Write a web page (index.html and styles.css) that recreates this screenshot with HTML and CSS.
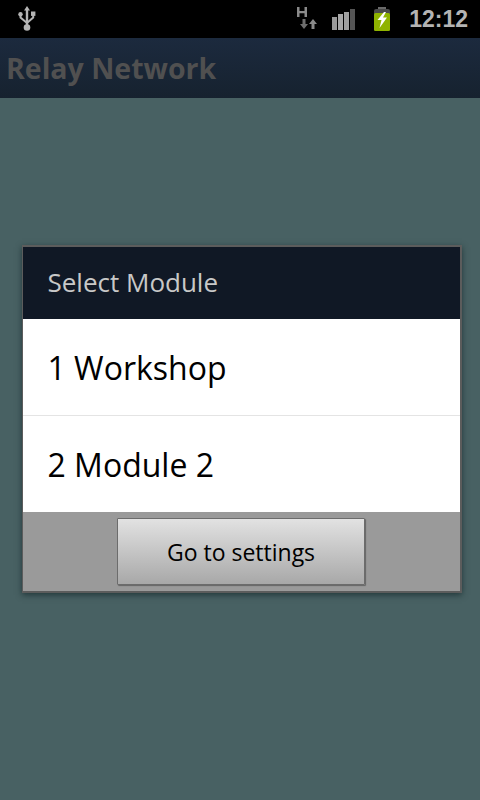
FILE: index.html
```html
<!DOCTYPE html>
<html lang="en">
<head>
<meta charset="utf-8">
<title>Relay Network</title>
<link rel="stylesheet" href="styles.css">
</head>
<body>
<div class="status">
  <svg class="usb" width="18" height="26" viewBox="0 0 18 26">
    <path d="M9 0 L12 4.500 H10.200 V19 H7.800 V4.500 H6 Z" fill="#b4b4b4"/>
    <path d="M2.500 9 V11.500 L9 17 L15.200 11.500 V9" fill="none" stroke="#b4b4b4" stroke-width="2"/>
    <circle cx="2.500" cy="8.300" r="2.200" fill="#b4b4b4"/>
    <rect x="13" y="5.500" width="4.400" height="4.400" fill="#b4b4b4"/>
    <circle cx="9" cy="21.500" r="3.300" fill="#b4b4b4"/>
  </svg>
  <div class="status-right">
    <svg class="net" width="22" height="30" viewBox="0 0 22 30">
      <path d="M1 3 H3.500 V7 H8.500 V3 H11 V13 H8.500 V9.200 H3.500 V13 H1 Z" fill="#8a8a8a"/>
      <path d="M6.500 15 H9.500 V20 H12 L8 25 L4 20 H6.500 Z" fill="#6e6e6e"/>
      <path d="M15.500 25 H18.500 V20 H21 L17 15 L13 20 H15.500 Z" fill="#8a8a8a"/>
    </svg>
    <svg class="signal" width="24" height="24" viewBox="0 0 24 24">
      <rect x="1" y="10" width="5" height="13" fill="#9a9a9a"/>
      <rect x="7" y="7" width="5" height="16" fill="#a8a8a8"/>
      <rect x="13" y="5" width="5" height="18" fill="#a0a0a0"/>
      <rect x="19" y="2" width="5" height="21" fill="#555555"/>
    </svg>
    <svg class="battery" width="18" height="26" viewBox="0 0 18 26">
      <rect x="5" y="1" width="8" height="2" fill="#6a6a6a"/>
      <rect x="1" y="3" width="16" height="22" rx="2" fill="#4a4a4a"/>
      <rect x="1" y="7" width="16" height="18" rx="1.500" fill="#8fb300"/>
      <path d="M11 6 L4.500 14 H8.500 L6.500 22 L14 11.500 H10 L13 6 Z" fill="#ffffff"/>
    </svg>
    <span class="clock">12:12</span>
  </div>
</div>
<div class="screen">
  <header class="appbar">Relay Network</header>
  <div class="scrim">
    <section class="dialog">
      <h1 class="dialog-title">Select Module</h1>
      <ul class="list">
        <li class="item">1 Workshop</li>
        <li class="item">2 Module 2</li>
      </ul>
      <div class="footer">
        <button class="btn" type="button">Go to settings</button>
      </div>
    </section>
  </div>
</div>
</body>
</html>
```
FILE: styles.css
```css
* { box-sizing: border-box; }
html, body { margin: 0; padding: 0; height: 100%; }
body {
  width: 480px;
  height: 800px;
  display: flex;
  flex-direction: column;
  overflow: hidden;
  background: #000;
  font-family: "Open Sans", "Noto Sans", sans-serif;
}
.status {
  height: 38px;
  flex: none;
  background: #000;
  display: flex;
  align-items: center;
  justify-content: space-between;
  padding: 0 12px 0 18px;
}
.status-right { display: flex; align-items: center; }
.net { margin-right: 13px; }
.signal { margin-right: 18px; }
.battery { margin-right: 18px; }
.clock {
  font-family: "Liberation Sans", Arial, sans-serif;
  font-size: 23px;
  font-weight: 700;
  color: #b4b4b4;
  line-height: 38px;
}
.screen {
  flex: 1;
  position: relative;
  background: #486163;
}
.appbar {
  height: 60px;
  padding: 0 6px;
  background: linear-gradient(#1c2a3e, #16222f);
  color: #505050;
  font-size: 28.500px;
  font-weight: 700;
  line-height: 60px;
}
.scrim {
  position: absolute;
  inset: 0;
  display: flex;
  align-items: center;
  justify-content: center;
}
.dialog {
  width: 440px;
  height: 348px;
  margin-left: 3px;
  border: 2px solid #5c5c5c;
  border-left-width: 1px;
  display: flex;
  flex-direction: column;
  box-shadow: 0 2px 6px rgba(25, 45, 47, 0.8);
}
.dialog-title {
  margin: 0;
  height: 72px;
  padding-left: 25px;
  background: #101825;
  color: #c8c8c8;
  font-size: 26px;
  font-weight: 400;
  line-height: 70px;
}
.list { margin: 0; padding: 0; list-style: none; background: #fff; }
.item {
  height: 96px;
  padding-left: 25px;
  color: #000;
  font-size: 32px;
  line-height: 98px;
}
.item + .item { height: 97px; border-top: 1px solid #e4e4e4; }
.footer {
  flex: 1;
  display: flex;
  justify-content: center;
  align-items: center;
  background: #9a9a9a;
}
.btn {
  width: 248px;
  height: 67px;
  border: 1px solid #6c6c6c;
  border-radius: 1px;
  background: linear-gradient(#e2e2e2, #a8a8a8);
  box-shadow: 1px 1px 1px #666;
  color: #000;
  font-family: inherit;
  font-size: 23px;
}
```
